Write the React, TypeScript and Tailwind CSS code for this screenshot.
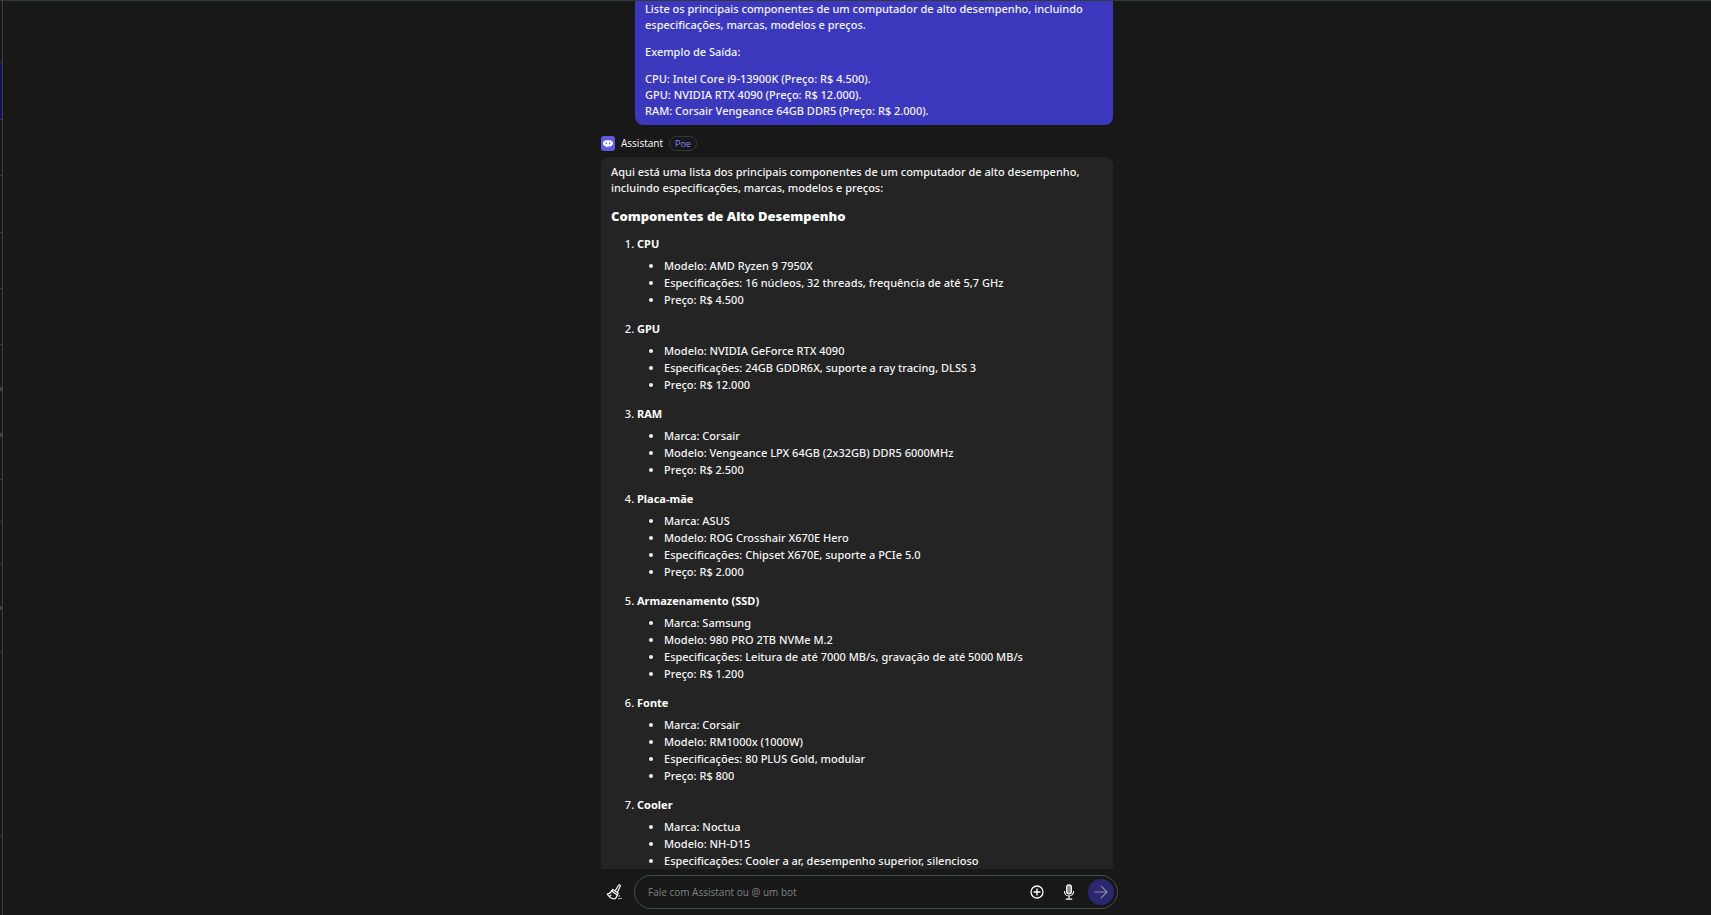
import type { ReactNode } from "react";

type Component = { name: string; details: string[] };

const components: Component[] = [
  {
    name: "CPU",
    details: [
      "Modelo: AMD Ryzen 9 7950X",
      "Especificações: 16 núcleos, 32 threads, frequência de até 5,7 GHz",
      "Preço: R$ 4.500",
    ],
  },
  {
    name: "GPU",
    details: [
      "Modelo: NVIDIA GeForce RTX 4090",
      "Especificações: 24GB GDDR6X, suporte a ray tracing, DLSS 3",
      "Preço: R$ 12.000",
    ],
  },
  {
    name: "RAM",
    details: ["Marca: Corsair", "Modelo: Vengeance LPX 64GB (2x32GB) DDR5 6000MHz", "Preço: R$ 2.500"],
  },
  {
    name: "Placa-mãe",
    details: [
      "Marca: ASUS",
      "Modelo: ROG Crosshair X670E Hero",
      "Especificações: Chipset X670E, suporte a PCIe 5.0",
      "Preço: R$ 2.000",
    ],
  },
  {
    name: "Armazenamento (SSD)",
    details: [
      "Marca: Samsung",
      "Modelo: 980 PRO 2TB NVMe M.2",
      "Especificações: Leitura de até 7000 MB/s, gravação de até 5000 MB/s",
      "Preço: R$ 1.200",
    ],
  },
  {
    name: "Fonte",
    details: [
      "Marca: Corsair",
      "Modelo: RM1000x (1000W)",
      "Especificações: 80 PLUS Gold, modular",
      "Preço: R$ 800",
    ],
  },
  {
    name: "Cooler",
    details: [
      "Marca: Noctua",
      "Modelo: NH-D15",
      "Especificações: Cooler a ar, desempenho superior, silencioso",
    ],
  },
];

function SidebarEdge() {
  return (
    <aside className="flex w-[3px] shrink-0 flex-col border-r border-[#3a3f3f] bg-[#181818]">
      <div className="h-[62px] border-b border-[#333838]" />
      <div className="h-[57px] border-b border-[#333838] bg-[#12125c]" />
      <div className="h-14 border-b border-[#333838]" />
      <div className="h-[57px] border-b border-[#333838]" />
      <div className="h-14 border-b border-[#333838]" />
      <div className="h-14 border-b border-[#333838]" />
      <div className="h-[46px] border-b-4 border-[#3a3f3f]" />
      <div className="h-[46px] border-b-4 border-[#3a3f3f]" />
      <div className="h-[43px] border-b border-[#333838]" />
      <div className="h-[42px] border-b border-[#333838]" />
      <div className="h-[42px] border-b border-[#333838]" />
      <div className="h-[46px] border-b-4 border-[#3a3f3f]" />
      <div className="h-[42px] border-b border-[#333838]" />
      <div className="h-[184px] border-b border-[#333838]" />
    </aside>
  );
}

function BotIcon() {
  return (
    <svg viewBox="0 0 14 15" className="h-[15px] w-3.5 shrink-0" aria-hidden="true">
      <rect width="14" height="15" rx="3.2" fill="#5d5cde" />
      <path
        d="M5 4.300h4a2.400 2.400 0 0 1 1.900.9 1.900 1.900 0 0 1 1.100 1.800v.7a1.900 1.900 0 0 1-1.100 1.800 2.400 2.400 0 0 1-1.900.9H6.700L4.800 11.800v-1.500a2.400 2.400 0 0 1-1.700-.8A1.900 1.900 0 0 1 2 7.700V7a1.900 1.900 0 0 1 1.100-1.800A2.400 2.400 0 0 1 5 4.300z"
        fill="#fff"
      />
      <rect x="4.600" y="6.400" width="1.400" height="1.800" rx=".6" fill="#5d5cde" />
      <rect x="8" y="6.400" width="1.400" height="1.800" rx=".6" fill="#5d5cde" />
    </svg>
  );
}

function BroomIcon() {
  return (
    <svg
      viewBox="0 0 16 16"
      className="size-4"
      fill="none"
      stroke="#fff"
      strokeWidth="1.2"
      strokeLinejoin="round"
      strokeLinecap="round"
      aria-hidden="true"
    >
      <path d="M9.500 6.300 12.600 1.300a.9.900 0 0 1 1.600.9L11.700 7.600" />
      <path d="M6.700 5.400 12.300 9.300l-1 1.600-5.700-3.800z" />
      <path d="M5.600 7.100C4.600 9 3.400 9.800 1.200 10c1.300 2.300 3.600 4.500 7.300 5 1.400-.8 2.400-2.200 2.800-3.900M3.600 12.300l1.400-1.200" />
      <path d="M13.200 12v.1M12.900 14.600v.1M15 14.300v.1" strokeWidth="1.300" />
    </svg>
  );
}

function PlusCircleIcon() {
  return (
    <svg viewBox="0 0 14 14" className="size-3.5" fill="none" stroke="#fff" strokeWidth="1.3" strokeLinecap="round" aria-hidden="true">
      <circle cx="7" cy="7" r="6" />
      <path d="M7 4v6M4 7h6" />
    </svg>
  );
}

function MicIcon() {
  return (
    <svg viewBox="0 0 12 16" className="h-4 w-3" fill="none" stroke="#fff" strokeWidth="1.2" strokeLinecap="round" aria-hidden="true">
      <rect x="3.600" y=".8" width="4.800" height="9.200" rx="2.400" fill="#8c8c8c" />
      <path d="M1.500 7.500a4.500 4.500 0 0 0 9 0M6 12v3M3.200 15.200h5.600" />
    </svg>
  );
}

function ArrowIcon() {
  return (
    <svg
      viewBox="0 0 14 14"
      className="size-3.5"
      fill="none"
      stroke="#8f8e9d"
      strokeWidth="1.2"
      strokeLinecap="round"
      strokeLinejoin="round"
      aria-hidden="true"
    >
      <path d="M1 7h12M7.200 1.200 13 7l-5.800 5.800" />
    </svg>
  );
}

function IconButton({ label, className, children }: { label: string; className: string; children: ReactNode }) {
  return (
    <button type="button" aria-label={label} className={className}>
      {children}
    </button>
  );
}

export default function App() {
  return (
    <div className="flex h-screen flex-col overflow-hidden border-t border-[#333838] bg-[#181818] font-['Noto_Sans','Open_Sans',sans-serif] text-[11px] leading-4 font-medium text-[#f4f4f4]">
      <div className="flex min-h-0 flex-1">
        <SidebarEdge />
        <main className="flex min-w-0 flex-1 flex-col items-center">
          <section className="min-h-0 w-full max-w-[512px] flex-1 overflow-hidden">
            <div className="ml-[34px] flex flex-col gap-[11px] rounded-b-lg bg-[#3b38bd] px-2.5 pb-1.5">
              <p>
                Liste os principais componentes de um computador de alto desempenho, incluindo especificações,
                marcas, modelos e preços.
              </p>
              <p>Exemplo de Saída:</p>
              <p>
                CPU: Intel Core i9-13900K (Preço: R$ 4.500).
                <br />
                GPU: NVIDIA RTX 4090 (Preço: R$ 12.000).
                <br />
                RAM: Corsair Vengeance 64GB DDR5 (Preço: R$ 2.000).
              </p>
            </div>

            <div className="mt-2.5 flex h-4 items-center">
              <BotIcon />
              <span className="ml-1.5 font-['Open_Sans'] text-[10px] text-white">Assistant</span>
              <span className="ml-1.5 rounded-full border border-[#333838] px-[5px] font-['Open_Sans'] text-[9px] leading-[13px] text-[#8584f5]">
                Poe
              </span>
            </div>

            <article className="mt-1.5 rounded-lg bg-[#242424] px-2.5 py-[7px]">
              <p>
                Aqui está uma lista dos principais componentes de um computador de alto desempenho, incluindo
                especificações, marcas, modelos e preços:
              </p>
              <h3 className="mt-3 font-['Open_Sans'] text-[13px] leading-4 font-extrabold text-white">
                Componentes de Alto Desempenho
              </h3>
              <ol className="mt-[11px] flex list-decimal flex-col gap-3 pl-[26px] leading-[17px]">
                {components.map((component) => (
                  <li key={component.name}>
                    <strong className="font-bold text-white">{component.name}</strong>
                    <ul className="mt-[5px] list-disc pl-[27px]">
                      {component.details.map((detail) => (
                        <li key={detail}>{detail}</li>
                      ))}
                    </ul>
                  </li>
                ))}
              </ol>
            </article>
          </section>

          <form
            className="flex w-full max-w-[522px] items-center py-1.5 pl-2.5"
            onSubmit={(event) => event.preventDefault()}
          >
            <IconButton label="Limpar contexto" className="mr-3 shrink-0">
              <BroomIcon />
            </IconButton>
            <div className="flex h-[34px] min-w-0 flex-1 items-center rounded-full border border-[#454b4b] pr-[3px] pl-[13px]">
              <input
                type="text"
                aria-label="Mensagem"
                placeholder="Fale com Assistant ou @ um bot"
                className="min-w-0 flex-1 bg-transparent font-['Open_Sans'] text-[10px] leading-4 font-normal outline-none placeholder:text-[#7d8383]"
              />
              <IconButton label="Anexar" className="mr-[19px]">
                <PlusCircleIcon />
              </IconButton>
              <IconButton label="Falar" className="mr-[13px]">
                <MicIcon />
              </IconButton>
              <IconButton
                label="Enviar"
                className="flex size-[26px] items-center justify-center rounded-full bg-[#2a2870]"
              >
                <ArrowIcon />
              </IconButton>
            </div>
          </form>
        </main>
      </div>
    </div>
  );
}
